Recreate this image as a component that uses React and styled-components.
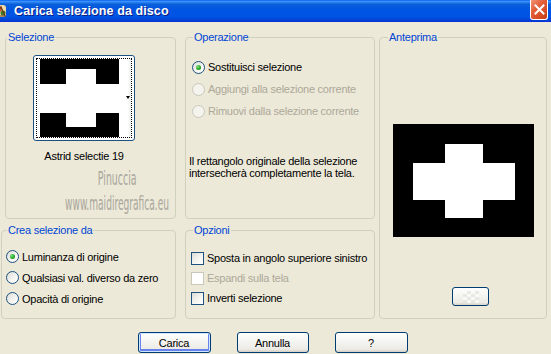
import React from "react";
import styled, { createGlobalStyle, css } from "styled-components";

const GlobalStyle = createGlobalStyle`
  html, body {
    margin: 0;
    padding: 0;
    background: #ece9d8;
  }
  body {
    font-family: "Liberation Sans", Arial, sans-serif;
    font-size: 11px;
    letter-spacing: -0.25px;
    color: #000;
  }
`;

const Window = styled.div`
  width: 551px;
  height: 354px;
  display: flex;
  flex-direction: column;
  background: #ece9d8;
  overflow: hidden;
`;

const TitleBar = styled.div`
  height: 21px;
  display: flex;
  align-items: center;
  border-bottom: 1px solid #0831d9;
  background: linear-gradient(
    to bottom,
    #0058ee 0%,
    #3d95ff 6%,
    #0a5fd8 20%,
    #0054e3 50%,
    #0055e5 80%,
    #0046d5 92%,
    #003dd7 100%
  );
`;

const AppIcon = styled.svg`
  flex: none;
  margin-left: -8px;
`;

const Title = styled.span`
  margin-left: 6px;
  color: #fff;
  font-weight: bold;
  font-size: 12.5px;
  letter-spacing: 0.1px;
  text-shadow: 1px 1px 0 #0a1e80;
  flex: 1;
`;

const CloseButton = styled.div`
  flex: none;
  width: 18px;
  height: 20px;
  margin-right: 3px;
  margin-top: -1px;
  border: 1px solid #fff;
  border-top: none;
  border-radius: 0 0 3px 3px;
  background: linear-gradient(135deg, #f19477 0%, #e35d37 40%, #c93e16 100%);
  display: flex;
  align-items: center;
  justify-content: center;
  box-sizing: border-box;
`;

const Body = styled.div`
  display: grid;
  grid-template-columns: 184px 194px 168px;
  grid-template-rows: 188px 95px;
  row-gap: 5px;
  padding: 9px 0 0 1px;
`;

const Box = styled.fieldset`
  position: relative;
  margin: 0 0 0 ${(p) => p.$ml || 0}px;
  padding: 0;
  width: ${(p) => p.$w}px;
  min-width: 0;
  box-sizing: border-box;
  border: 1px solid #d0d0bf;
  border-radius: 4px;
  grid-column: ${(p) => p.$col};
  grid-row: ${(p) => p.$row};
`;

const Legend = styled.legend`
  margin-left: ${(p) => p.$off || 7}px;
  padding: 0 1px;
  color: #0046d5;
  font-size: 11px;
  line-height: 13px;
`;

const CenterCol = styled.div`
  display: flex;
  flex-direction: column;
  align-items: center;
  padding: ${(p) => p.$pt || 0}px ${(p) => p.$pr || 0}px 0 0;
`;

const OptList = styled.div`
  display: flex;
  flex-direction: column;
  padding: ${(p) => p.$pt}px 0 0 ${(p) => p.$pl}px;
`;

const Opt = styled.label`
  display: flex;
  align-items: center;
  gap: 3px;
  height: ${(p) => p.$h}px;
  white-space: nowrap;
  color: ${(p) => (p.$disabled ? "#aca899" : "#000")};
`;

const Radio = styled.span`
  flex: none;
  width: 13px;
  height: 13px;
  box-sizing: border-box;
  border-radius: 50%;
  border: 1px solid ${(p) => (p.$disabled ? "#cac8bb" : "#1c5180")};
  background: ${(p) =>
    p.$disabled
      ? "#f4f3ee"
      : "linear-gradient(135deg, #dcdcd7 0%, #f6f6f3 60%, #ffffff 100%)"};
  display: flex;
  align-items: center;
  justify-content: center;
  &::after {
    content: "";
    display: ${(p) => (p.$checked ? "block" : "none")};
    width: 5px;
    height: 5px;
    border-radius: 50%;
    background: radial-gradient(circle at 35% 35%, #7be27b 0%, #21a121 60%, #1a8a1a 100%);
  }
`;

const Check = styled.span`
  flex: none;
  width: 13px;
  height: 13px;
  box-sizing: border-box;
  border: 1px solid ${(p) => (p.$disabled ? "#cac8bb" : "#1c5180")};
  background: ${(p) =>
    p.$disabled
      ? "#fff"
      : "linear-gradient(135deg, #dcdcd7 0%, #f4f4f0 55%, #ffffff 100%)"};
`;

const Thumb = styled.div`
  width: 102px;
  height: 86px;
  box-sizing: border-box;
  border: 1px solid #1c5180;
  border-radius: 3px;
  background: #fff;
  padding: 2px;
  display: flex;
`;

const Focus = styled.div`
  flex: 1;
  border: 1px dotted #000;
  display: flex;
  align-items: stretch;
  padding-left: 3px;
`;

const ArrowCol = styled.div`
  flex: 1;
  display: flex;
  align-items: center;
  justify-content: flex-end;
  padding-right: 1px;
  background: linear-gradient(to right, #fff 70%, #eeeeea 100%);
`;

const Arrow = styled.span`
  width: 0;
  height: 0;
  border-left: 2.5px solid transparent;
  border-right: 2.5px solid transparent;
  border-top: 3px solid #000;
  margin-bottom: 2px;
`;

const Caption = styled.div`
  margin-top: 9px;
  line-height: 13px;
`;

const Watermark = styled.div`
  position: absolute;
  left: 21px;
  top: 122px;
  width: 180px;
  display: flex;
  flex-direction: column;
  align-items: center;
  color: #aaa69c;
  font-family: "DejaVu Sans Condensed", "Liberation Sans", sans-serif;
  font-size: 19px;
  letter-spacing: 0;
  line-height: 25px;
  pointer-events: none;
`;

const WmLine = styled.span`
  display: block;
  transform: scaleX(${(p) => p.$sx});
  white-space: nowrap;
`;

const Note = styled.p`
  margin: ${(p) => p.$mt}px 0 0 3px;
  line-height: 12px;
`;

const Preview = styled.svg`
  display: block;
`;

const Buttons = styled.div`
  display: flex;
  justify-content: center;
  gap: 26px;
  padding-right: 6px;
  margin-top: 13px;
`;

const XPButton = styled.button`
  width: ${(p) => p.$w || 73}px;
  height: ${(p) => p.$h || 21}px;
  padding: 0;
  font-family: inherit;
  font-size: 11px;
  letter-spacing: inherit;
  color: #000;
  border: 1px solid #003c74;
  border-radius: 3px;
  background: linear-gradient(to bottom, #ffffff 0%, #f3f3ef 50%, #ecebe6 85%, #d6d0c5 100%);
  display: flex;
  align-items: center;
  justify-content: center;
  ${(p) =>
    p.$default &&
    css`
      box-shadow: inset 0 0 0 1px #cee7ff, inset 0 -1px 0 2px #6982ee;
    `}
`;

const SwatchButton = styled(XPButton)`
  margin: 50px 0 0 15px;
`;

const Checker = styled.span`
  width: 16px;
  height: 12px;
  background: repeating-conic-gradient(#e6e6e0 0 25%, #fbfbf9 0 50%) 0 0 / 8px 6px;
  opacity: 0.8;
`;

const Cross = ({ w, h, bars }) => (
  <Preview width={w} height={h} viewBox={`0 0 ${w} ${h}`}>
    <rect width={w} height={h} fill="#000" />
    {bars.map((b, i) => (
      <rect key={i} x={b[0]} y={b[1]} width={b[2]} height={b[3]} fill="#fff" />
    ))}
  </Preview>
);

const Option = ({ kind, label, checked, disabled, h }) => (
  <Opt $h={h} $disabled={disabled}>
    {kind === "radio" ? (
      <Radio $checked={checked} $disabled={disabled} />
    ) : (
      <Check $disabled={disabled} />
    )}
    <span>{label}</span>
  </Opt>
);

export default function App() {
  return (
    <Window>
      <GlobalStyle />
      <TitleBar>
        <AppIcon width="16" height="16" viewBox="0 0 16 16">
          <rect x="2" y="2" width="12" height="12" rx="3" fill="#f3d9a4" />
          <circle cx="7" cy="6" r="3" fill="#d5562a" />
          <circle cx="11" cy="10" r="2.5" fill="#3b7c2a" />
          <path d="M3 13 L9 4 L13 13 Z" fill="none" stroke="#6b3f1a" strokeWidth="1.2" />
        </AppIcon>
        <Title>Carica selezione da disco</Title>
        <CloseButton>
          <svg width="11" height="11" viewBox="0 0 11 11">
            <path d="M1.5 1.5 L9.5 9.5 M9.5 1.5 L1.5 9.5" stroke="#fff" strokeWidth="2" strokeLinecap="square" />
          </svg>
        </CloseButton>
      </TitleBar>

      <Body>
        <Box $w={171} $ml={4} $col={1} $row={1}>
          <Legend $off={1}>Selezione</Legend>
          <CenterCol $pt={11} $pr={13}>
            <Thumb>
              <Focus>
                <Cross w={79} h={78} bars={[[0, 25, 79, 29], [26, 10, 30, 58]]} />
                <ArrowCol>
                  <Arrow />
                </ArrowCol>
              </Focus>
            </Thumb>
            <Caption>Astrid selectie 19</Caption>
          </CenterCol>
          <Watermark>
            <WmLine $sx={0.55}>Pinuccia</WmLine>
            <WmLine $sx={0.53}>www.maidiregrafica.eu</WmLine>
          </Watermark>
        </Box>

        <Box $w={190} $col={2} $row={1}>
          <Legend>Operazione</Legend>
          <OptList $pt={12} $pl={6}>
            <Option kind="radio" h={22} label="Sostituisci selezione" checked />
            <Option kind="radio" h={22} label="Aggiungi alla selezione corrente" disabled />
            <Option kind="radio" h={22} label="Rimuovi dalla selezione corrente" disabled />
          </OptList>
          <Note $mt={33}>
            Il rettangolo originale della selezione
            <br />
            intersecherà completamente la tela.
          </Note>
        </Box>

        <Box $w={168} $col={3} $row="1 / span 2">
          <Legend $off={8}>Anteprima</Legend>
          <CenterCol $pt={80}>
            <Cross w={141} h={113} bars={[[20, 39, 102, 37], [52, 20, 38, 74]]} />
            <SwatchButton $w={37} $h={19}>
              <Checker />
            </SwatchButton>
          </CenterCol>
        </Box>

        <Box $w={175} $col={1} $row={2}>
          <Legend $off={5}>Crea selezione da</Legend>
          <OptList $pt={9} $pl={4}>
            <Option kind="radio" h={21} label="Luminanza di origine" checked />
            <Option kind="radio" h={21} label="Qualsiasi val. diverso da zero" />
            <Option kind="radio" h={21} label="Opacità di origine" />
          </OptList>
        </Box>

        <Box $w={190} $col={2} $row={2}>
          <Legend>Opzioni</Legend>
          <OptList $pt={11} $pl={5}>
            <Option kind="check" h={20} label="Sposta in angolo superiore sinistro" />
            <Option kind="check" h={20} label="Espandi sulla tela" disabled />
            <Option kind="check" h={20} label="Inverti selezione" />
          </OptList>
        </Box>
      </Body>

      <Buttons>
        <XPButton $default>Carica</XPButton>
        <XPButton $w={72}>Annulla</XPButton>
        <XPButton>?</XPButton>
      </Buttons>
    </Window>
  );
}
